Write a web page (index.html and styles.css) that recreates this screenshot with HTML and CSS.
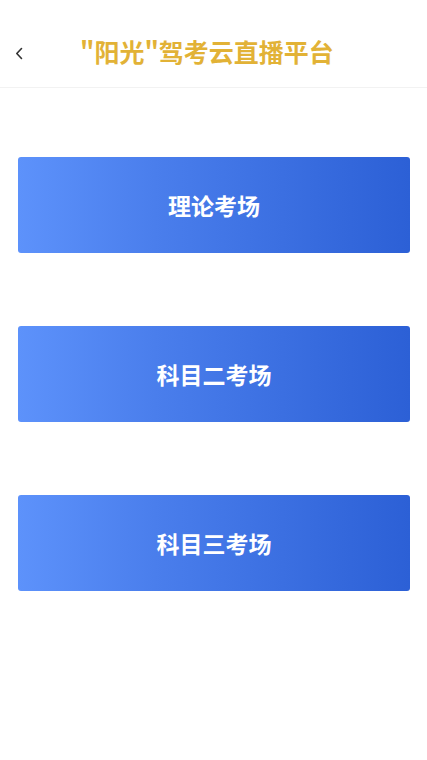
FILE: index.html
```html
<!DOCTYPE html>
<html lang="zh">
<head>
<meta charset="utf-8">
<link rel="stylesheet" href="styles.css">
</head>
<body>
<header class="bar">
  <span class="back"><svg width="8" height="13" viewBox="0 0 8 13"><path d="M6.5 1.5 L1.8 6.5 L6.5 11.5" fill="none" stroke="#333" stroke-width="1.6" stroke-linecap="round" stroke-linejoin="round"/></svg></span>
  <h1 class="title">"阳光"驾考云直播平台</h1>
</header>
<main class="list">
  <a class="btn">理论考场</a>
  <a class="btn">科目二考场</a>
  <a class="btn">科目三考场</a>
</main>
</body>
</html>
```
FILE: styles.css
```css
html, body { margin: 0; padding: 0; background: #fff; }
body { font-family: "Noto Sans CJK SC", "Noto Sans", sans-serif; width: 427px; }
.bar {
  height: 88px;
  border-bottom: 1px solid #f2f2f2;
  display: flex;
  align-items: center;
  padding-top: 16px;
  box-sizing: border-box;
}
.back { width: 16px; margin-left: 15px; display: flex; align-items: center; padding-top: 4px; }
.title {
  margin: 0 0 0 49px;
  font-size: 25px;
  font-weight: 700;
  color: #e2b236;
  line-height: 1;
}
.list {
  display: flex;
  flex-direction: column;
  gap: 73px;
  padding: 69px 17px 0 18px;
}
.btn {
  height: 96px;
  border-radius: 3px;
  background: linear-gradient(90deg, #5d92fb 0%, #4a7eec 35%, #2c60d6 100%);
  display: flex;
  align-items: center;
  justify-content: center;
  color: #fff;
  font-size: 23px;
  font-weight: 700;
}
```
